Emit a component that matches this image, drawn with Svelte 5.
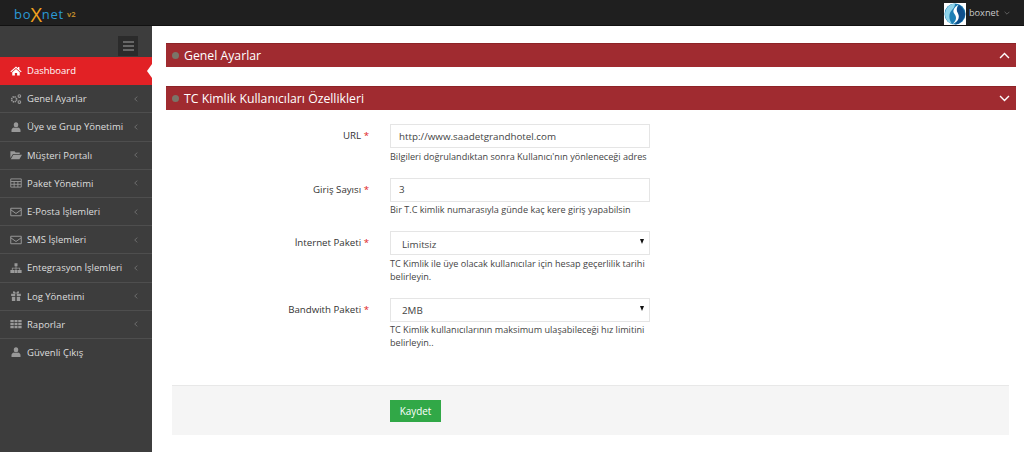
<script>
    const menu = [
        { label: 'Dashboard', icon: 'home', active: true, arrow: false },
        { label: 'Genel Ayarlar', icon: 'cogs', arrow: true },
        { label: 'Üye ve Grup Yönetimi', icon: 'user', arrow: true },
        { label: 'Müşteri Portalı', icon: 'folder', arrow: true },
        { label: 'Paket Yönetimi', icon: 'table', arrow: true },
        { label: 'E-Posta İşlemleri', icon: 'mail', arrow: true },
        { label: 'SMS İşlemleri', icon: 'mail', arrow: true },
        { label: 'Entegrasyon İşlemleri', icon: 'sitemap', arrow: true },
        { label: 'Log Yönetimi', icon: 'gift', arrow: true },
        { label: 'Raporlar', icon: 'grid', arrow: true },
        { label: 'Güvenli Çıkış', icon: 'user', arrow: false }
    ];

    const fields = [
        { label: 'URL', value: 'http://www.saadetgrandhotel.com', help: "Bilgileri doğrulandıktan sonra Kullanıcı'nın yönleneceği adres" },
        { label: 'Giriş Sayısı', value: '3', help: 'Bir T.C kimlik numarasıyla günde kaç kere giriş yapabilsin' },
        { label: 'İnternet Paketi', value: 'Limitsiz', select: true, help: 'TC Kimlik ile üye olacak kullanıcılar için hesap geçerlilik tarihi belirleyin.' },
        { label: 'Bandwith Paketi', value: '2MB', select: true, help: 'TC Kimlik kullanıcılarının maksimum ulaşabileceği hız limitini belirleyin..' }
    ];
</script>

<div class="page">
    <header class="topbar">
        <div class="logo"><span class="blue">bo</span><span class="x">X</span><span class="blue">net</span><span class="ver">v2</span></div>
        <div class="account">
            <svg class="avatar" viewBox="0 0 22 22" width="22" height="22">
                <rect width="22" height="22" fill="#fff" />
                <circle cx="11" cy="11" r="10.500" fill="#1d7fb5" />
                <path d="M3 5 A10.500 10.500 0 0 0 8 21 C4 15 5 10 8 7 C10 5 11 3 11 0.500 C8 0.500 5 2 3 5Z" fill="#8fd3ea" />
                <path d="M15 2 C12 6 11 8 13 11 C15 14 14 18 11 21.500 C16 21 20 17 21 12 C21 8 18 4 15 2Z" fill="#0f4f8c" />
                <path d="M14.500 1.500 C10 4.500 8 8 10.500 11 C13 14 12.500 18 8.500 21 C13 19.500 16.500 15 14 10.500 C12 7.500 12.500 4.500 14.500 1.500Z" fill="#fff" />
            </svg>
            <span>boxnet</span>
            <svg class="caret" viewBox="0 0 10 6" width="6" height="4"><path d="M1 1l4 4 4-4" fill="none" stroke="#777" stroke-width="1.200" /></svg>
        </div>
    </header>

    <div class="body">
        <aside class="sidebar">
            <div class="toggle-row">
                <div class="toggle"><i></i><i></i><i></i></div>
            </div>
            <ul>
                {#each menu as item}
                    <li class:active={item.active}>
                        <svg class="icon" viewBox="0 0 16 16" width="12" height="12">
                            {#if item.icon === 'home'}
                                <path d="M8 2 L0.500 8.500 L1.500 9.500 L8 4 L14.500 9.500 L15.500 8.500 L12.500 6 V2.500 H10.500 V4.200Z M8 5.200 L3 9.500 V14 H6.500 V10.500 H9.500 V14 H13 V9.500Z" fill="#fff" />
                            {:else if item.icon === 'cogs'}
                                <circle cx="5.500" cy="8.500" r="3.300" fill="none" stroke="#999" stroke-width="2.200" stroke-dasharray="1.800 0.800" />
                                <circle cx="12.500" cy="4" r="1.800" fill="none" stroke="#999" stroke-width="1.400" />
                                <circle cx="12.500" cy="12" r="1.800" fill="none" stroke="#999" stroke-width="1.400" />
                            {:else if item.icon === 'user'}
                                <path d="M8 1.500 C10 1.500 11 3 11 5 C11 7 10 8.500 8 8.500 C6 8.500 5 7 5 5 C5 3 6 1.500 8 1.500Z M5.500 8.500 C6.500 9.500 9.500 9.500 10.500 8.500 C12.500 9 14 10 14 12 V14.500 H2 V12 C2 10 3.500 9 5.500 8.500Z" fill="#999" />
                            {:else if item.icon === 'folder'}
                                <path d="M0.500 3 H6 L7.500 4.500 H13 V6.500 H4 L0.500 12Z M4.500 7.500 H16 L12.500 13.500 H1Z" fill="#999" />
                            {:else if item.icon === 'table'}
                                <path d="M1 2.500 H15 V13.500 H1Z M1 6 H15 M1 9.700 H15 M5.500 6 V13.500 M10.500 6 V13.500" fill="none" stroke="#999" stroke-width="1.200" />
                            {:else if item.icon === 'mail'}
                                <path d="M1 3 H15 V13 H1Z M1 5 L8 10 L15 5" fill="none" stroke="#999" stroke-width="1.300" />
                            {:else if item.icon === 'sitemap'}
                                <path d="M6 1.500 H10 V5.500 H8.500 V7.500 H13.500 V10.500 H15.500 V14.500 H10.500 V10.500 H12.500 V8.500 H8.500 V10.500 H10 V14.500 H6 V10.500 H7.500 V8.500 H3.500 V10.500 H5.500 V14.500 H0.500 V10.500 H2.500 V7.500 H7.500 V5.500 H6Z" fill="#999" />
                            {:else if item.icon === 'gift'}
                                <path d="M1.500 5 H7 V8 H1.500Z M9 5 H14.500 V8 H9Z M2.500 9 H7 V14.500 H2.500Z M9 9 H13.500 V14.500 H9Z M5 1.500 C6.500 1.500 7.500 3 8 4.500 C8.500 3 9.500 1.500 11 1.500 C12.500 1.500 12.500 4.500 10.500 4.500 H5.500 C3.500 4.500 3.500 1.500 5 1.500Z" fill="#999" />
                            {:else}
                                <path d="M0.500 2.500 H5 V5.500 H0.500Z M6 2.500 H10 V5.500 H6Z M11 2.500 H15.500 V5.500 H11Z M0.500 6.500 H5 V9.500 H0.500Z M6 6.500 H10 V9.500 H6Z M11 6.500 H15.500 V9.500 H11Z M0.500 10.500 H5 V13.500 H0.500Z M6 10.500 H10 V13.500 H6Z M11 10.500 H15.500 V13.500 H11Z" fill="#999" />
                            {/if}
                        </svg>
                        <span class="label">{item.label}</span>
                        {#if item.arrow}
                            <svg class="chev" viewBox="0 0 6 8" width="4" height="6"><path d="M5 0.500 L1 4 L5 7.500" fill="none" stroke="#777" stroke-width="1.200" /></svg>
                        {/if}
                        {#if item.active}
                            <span class="notch"></span>
                        {/if}
                    </li>
                {/each}
            </ul>
        </aside>

        <main class="content">
            <div class="portlet-title">
                <span class="dot"></span>
                <h3>Genel Ayarlar</h3>
                <svg viewBox="0 0 16 10" width="11" height="7"><path d="M1.500 8.500 L8 2 L14.500 8.500" fill="none" stroke="#fff" stroke-width="2" /></svg>
            </div>
            <div class="portlet-title second">
                <span class="dot"></span>
                <h3>TC Kimlik Kullanıcıları Özellikleri</h3>
                <svg viewBox="0 0 16 10" width="11" height="7"><path d="M1.500 1.500 L8 8 L14.500 1.500" fill="none" stroke="#fff" stroke-width="2" /></svg>
            </div>

            <form class="form" on:submit|preventDefault>
                {#each fields as f}
                    <div class="row">
                        <div class="field-label">{f.label} <span class="req">*</span></div>
                        <div class="field">
                            {#if f.select}
                                <div class="select-wrap">
                                    <select class="control pick">
                                        <option>{f.value}</option>
                                    </select>
                                    <span class="tri"></span>
                                </div>
                            {:else}
                                <input class="control" type="text" value={f.value} />
                            {/if}
                            <div class="help">{f.help}</div>
                        </div>
                    </div>
                {/each}

                <div class="actions">
                    <button type="button">Kaydet</button>
                </div>
            </form>
        </main>
    </div>
</div>

<style>
    :global(body) {
        margin: 0;
        background: #fff;
        font-family: "Open Sans", "Noto Sans", sans-serif;
    }

    .page {
        height: 452px;
        overflow: hidden;
    }

    .topbar {
        height: 26px;
        box-sizing: border-box;
        background: #1f1f1f;
        border-bottom: 1px solid #111;
        display: flex;
        align-items: center;
        justify-content: space-between;
    }

    .logo {
        margin-left: 14px;
        font-size: 13px;
        line-height: 16px;
        letter-spacing: 0.8px;
        display: flex;
        align-items: center;
        padding-top: 2px;
    }

    .blue {
        color: #2b9ad6;
    }

    .x {
        color: #f0a01e;
        font-size: 20px;
        font-weight: 400;
        line-height: 16px;
        margin: 0 -1px;
        transform: translateY(1px);
    }

    .ver {
        color: #b8862a;
        font-size: 7.500px;
        font-weight: 700;
        letter-spacing: 0;
        margin-left: 3px;
    }

    .account {
        display: flex;
        align-items: center;
        color: #ccc;
        font-size: 9.200px;
        margin-right: 14px;
    }

    .avatar {
        margin: 2px 3px 0 0;
    }

    .caret {
        margin-left: 5px;
    }

    .body {
        display: flex;
        height: 426px;
    }

    .sidebar {
        width: 152px;
        flex: none;
        background: #3d3d3d;
    }

    .toggle-row {
        height: 30px;
        display: flex;
        justify-content: flex-end;
        align-items: flex-end;
        padding-right: 14px;
    }

    .toggle {
        width: 20px;
        height: 20px;
        background: #2b2b2b;
        display: flex;
        flex-direction: column;
        align-items: center;
        justify-content: center;
        gap: 2px;
    }

    .toggle i {
        display: block;
        width: 11px;
        height: 2px;
        background: #666;
    }

    ul {
        list-style: none;
        margin: 1px 0 0;
        padding: 0;
    }

    li {
        position: relative;
        height: 27.200px;
        border-bottom: 1px solid #4e4e4e;
        display: flex;
        align-items: center;
        padding-left: 10px;
        color: #ddd;
        font-size: 9.500px;
    }

    li:last-child {
        border-bottom: none;
    }

    li.active {
        background: #e22125;
        color: #fff;
        border-bottom-color: #e22125;
    }

    .icon {
        flex: none;
        margin-right: 5px;
    }

    .label {
        flex: 1;
        white-space: nowrap;
    }

    .chev {
        margin-right: 14px;
    }

    .notch {
        position: absolute;
        right: 0;
        top: 7px;
        width: 0;
        height: 0;
        border-top: 7px solid transparent;
        border-bottom: 7px solid transparent;
        border-right: 5px solid #fff;
    }

    .content {
        flex: 1;
        min-width: 0;
        padding: 17px 8px 0 14px;
    }

    .portlet-title {
        height: 24px;
        background: #a02b30;
        border-top: 1px solid #8c2327;
        box-sizing: border-box;
        display: flex;
        align-items: center;
        padding: 0 6px;
        color: #fff;
    }

    .portlet-title.second {
        margin-top: 19px;
    }

    .dot {
        width: 7px;
        height: 7px;
        border-radius: 50%;
        background: #7b7468;
        margin-right: 5px;
    }

    h3 {
        flex: 1;
        margin: 0;
        font-size: 12.250px;
        font-weight: 400;
    }

    .form {
        margin-top: 14px;
    }

    .row {
        display: flex;
        margin-bottom: 15px;
    }

    .field-label {
        width: 203px;
        padding-top: 5px;
        text-align: right;
        color: #333;
        font-size: 9.700px;
        flex: none;
    }

    .req {
        color: #e02222;
    }

    .field {
        margin-left: 21px;
        width: 260px;
    }

    .control {
        display: block;
        width: 100%;
        height: 24px;
        box-sizing: border-box;
        border: 1px solid #e5e5e5;
        border-radius: 0;
        background: #fff;
        padding: 0 8px;
        color: #444;
        font-family: inherit;
        font-size: 9.800px;
        outline: none;
    }

    .select-wrap {
        position: relative;
    }

    .pick {
        appearance: none;
        padding-left: 11px;
        padding-top: 2px;
    }

    .tri {
        position: absolute;
        right: 6px;
        top: 8px;
        width: 0;
        height: 0;
        border-left: 2.500px solid transparent;
        border-right: 2.500px solid transparent;
        border-top: 5px solid #111;
    }

    .help {
        margin-top: 1.500px;
        color: #444;
        font-size: 9.100px;
        line-height: 13px;
    }

    .actions {
        margin: 36px 7px 0 6px;
        height: 50px;
        background: #f5f5f5;
        border-top: 1px solid #e8e8e8;
        box-sizing: border-box;
        padding: 14px 0 0 218px;
    }

    button {
        display: block;
        width: 51px;
        height: 22px;
        padding: 0;
        border: none;
        background: #31a847;
        color: #fff;
        font-family: inherit;
        font-size: 9.900px;
    }
</style>
